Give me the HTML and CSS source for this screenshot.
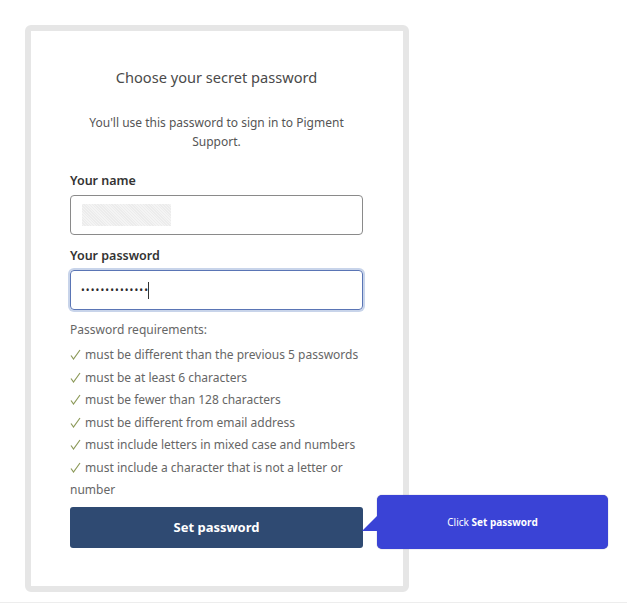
FILE: index.html
```html
<!DOCTYPE html>
<html>
<head>
<meta charset="utf-8">
<link rel="stylesheet" href="styles.css">
</head>
<body>
<div class="page">
  <div class="card">
    <h1 class="title">Choose your secret password</h1>
    <p class="subtitle">You'll use this password to sign in to Pigment Support.</p>
    <label class="label first">Your name</label>
    <div class="input"><span class="blur"></span></div>
    <label class="label">Your password</label>
    <div class="input focused"><span class="dots">••••••••••••••</span><span class="caret"></span></div>
    <div class="reqs">
      <div class="req-head">Password requirements:</div>
      <div class="req"><svg class="check" width="11" height="11" viewBox="0 0 11 11"><polyline points="1,6.5 3.5,10 10,1" fill="none" stroke="#8d9a5a" stroke-width="1.2"/></svg> must be different than the previous 5 passwords</div>
      <div class="req"><svg class="check" width="11" height="11" viewBox="0 0 11 11"><polyline points="1,6.5 3.5,10 10,1" fill="none" stroke="#8d9a5a" stroke-width="1.2"/></svg> must be at least 6 characters</div>
      <div class="req"><svg class="check" width="11" height="11" viewBox="0 0 11 11"><polyline points="1,6.5 3.5,10 10,1" fill="none" stroke="#8d9a5a" stroke-width="1.2"/></svg> must be fewer than 128 characters</div>
      <div class="req"><svg class="check" width="11" height="11" viewBox="0 0 11 11"><polyline points="1,6.5 3.5,10 10,1" fill="none" stroke="#8d9a5a" stroke-width="1.2"/></svg> must be different from email address</div>
      <div class="req"><svg class="check" width="11" height="11" viewBox="0 0 11 11"><polyline points="1,6.5 3.5,10 10,1" fill="none" stroke="#8d9a5a" stroke-width="1.2"/></svg> must include letters in mixed case and numbers</div>
      <div class="req"><svg class="check" width="11" height="11" viewBox="0 0 11 11"><polyline points="1,6.5 3.5,10 10,1" fill="none" stroke="#8d9a5a" stroke-width="1.2"/></svg> must include a character that is not a letter or number</div>
    </div>
    <div class="btn-wrap">
      <button class="btn">Set password</button>
      <div class="tip">
        <svg class="tip-arrow" width="16" height="16" viewBox="0 0 16 16"><polygon points="0,15 15,0 15,15" fill="#3a43d6"/></svg>
        Click&nbsp;<b>Set password</b>
      </div>
    </div>
  </div>
</div>
<div class="footer-line"></div>
</body>
</html>
```
FILE: styles.css
```css
html, body { margin: 0; padding: 0; background: #fff; }
body { font-family: "Noto Sans", "Open Sans", sans-serif; width: 627px; height: 604px; overflow: hidden; }
.page { padding: 25px 0 0 25px; height: 577px; box-sizing: border-box; }
.card {
  width: 384px; height: 567px; box-sizing: border-box;
  border: 6px solid #e6e6e6; border-radius: 6px;
  padding: 0 40px 0 39px;
  display: flex; flex-direction: column;
}
.title { font-size: 14.6px; font-weight: 400; color: #4a4a4a; text-align: center; margin: 36px 0 0; line-height: 20px; }
.subtitle { font-size: 12px; color: #555; text-align: center; margin: 26px 12px 0; line-height: 19px; }
.label { font-size: 12.5px; font-weight: 600; color: #333; margin-top: 12px; line-height: 18px; }
.label.first { margin-top: 21px; }
.input {
  margin-top: 5px; height: 40px; box-sizing: border-box;
  border: 1px solid #8a8a8a; border-radius: 4px; position: relative;
  display: flex; align-items: center; padding-left: 11px;
}
.blur {
  width: 89px; height: 22px;
  background: repeating-linear-gradient(45deg, #ececec 0 1px, #f4f4f4 1px 2px);
}
.focused { border: 1px solid #5a75b5; box-shadow: 0 0 0 2px #c8d4ea; padding-left: 10px; }
.dots { font-size: 10px; letter-spacing: 1.1px; color: #2a2a2a; }
.caret { width: 1px; height: 17px; background: #333; margin-left: -1px; }
.reqs { margin-top: 10px; font-size: 12px; color: #666; line-height: 22.5px; }
.req-head { line-height: 20px; margin-bottom: 4px; }
.check { vertical-align: -1px; margin-right: 1px; }
.btn-wrap { position: relative; margin-top: 5px; }
.btn {
  width: 293px; height: 41px; border: none; border-radius: 3px;
  background: #2f4a72; color: #fff; font-family: inherit;
  font-size: 13px; font-weight: 700; display: block;
}
.tip {
  position: absolute; left: 307px; top: -12px;
  width: 231px; height: 54px; box-sizing: border-box;
  background: #3a43d6; border-radius: 5px;
  color: #fff; font-size: 10px; display: flex; justify-content: center;
  padding-top: 20px; line-height: 14px; box-shadow: 0 0 1px #6b6b90;
}
.tip b { font-weight: 700; }
.tip-arrow { position: absolute; left: -15px; top: 21px; }
.footer-line { height: 0; border-top: 1px solid #ededed; position: absolute; left: 0; right: 0; top: 602px; }
```
